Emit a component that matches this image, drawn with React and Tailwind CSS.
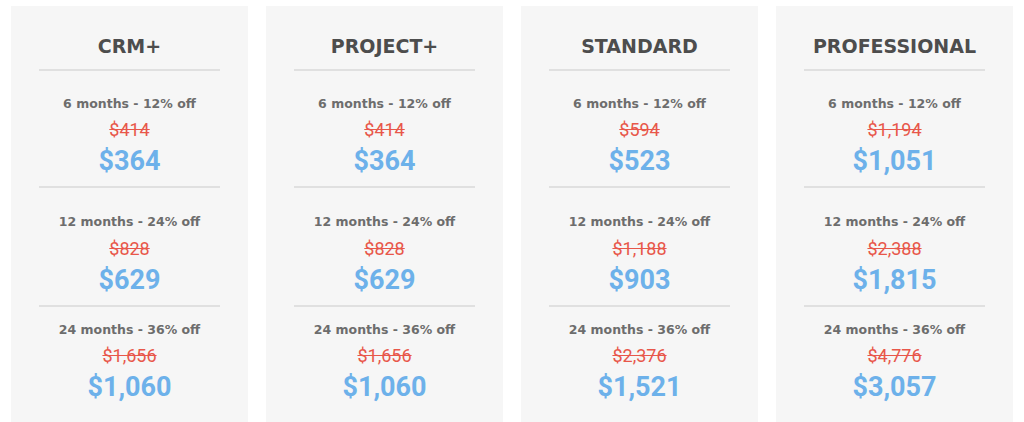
import React from "react";

const plans = [
  {
    name: "CRM+",
    rows: [
      ["6 months - 12% off", "$414", "$364"],
      ["12 months - 24% off", "$828", "$629"],
      ["24 months - 36% off", "$1,656", "$1,060"],
    ],
  },
  {
    name: "PROJECT+",
    rows: [
      ["6 months - 12% off", "$414", "$364"],
      ["12 months - 24% off", "$828", "$629"],
      ["24 months - 36% off", "$1,656", "$1,060"],
    ],
  },
  {
    name: "STANDARD",
    rows: [
      ["6 months - 12% off", "$594", "$523"],
      ["12 months - 24% off", "$1,188", "$903"],
      ["24 months - 36% off", "$2,376", "$1,521"],
    ],
  },
  {
    name: "PROFESSIONAL",
    rows: [
      ["6 months - 12% off", "$1,194", "$1,051"],
      ["12 months - 24% off", "$2,388", "$1,815"],
      ["24 months - 36% off", "$4,776", "$3,057"],
    ],
  },
];

const sectionCls = [
  "pt-[24px] pb-[9px] border-b-2 border-[#e0e0e0]",
  "pt-[25px] pb-[9px] border-b-2 border-[#e0e0e0]",
  "pt-[14px]",
];

const strikeCls = ["mt-[5px]", "mt-[6px]", "mt-[5px]"];

function Section({ row, idx }) {
  const [label, old, price] = row;
  return (
    <div className={"flex flex-col items-center " + sectionCls[idx]}>
      <div className="h-[18px] leading-[18px] text-[12.5px] font-bold text-[#6d6d6d] font-['DejaVu_Sans',sans-serif]">
        {label}
      </div>
      <div className={"h-[24px] leading-[24px] text-[18px] text-[#e8574a] line-through font-['Roboto',sans-serif] " + strikeCls[idx]}>
        {old}
      </div>
      <div className="mt-[3px] h-[32px] leading-[32px] text-[27px] font-bold text-[#6db1ea] font-['Roboto',sans-serif]">
        {price}
      </div>
    </div>
  );
}

export default function App() {
  return (
    <div className="w-[1024px] h-[422px] overflow-hidden bg-white flex gap-[18px] px-[11px] pt-[6px]">
      {plans.map((p) => (
        <div key={p.name} className="w-[237px] h-[430px] shrink-0 bg-[#f6f6f6] px-[28px]">
          <div className="h-[65px] pt-[28px] border-b-2 border-[#e0e0e0] flex justify-center">
            <div className="h-[24px] leading-[24px] text-[19px] font-bold text-[#4d4d4d] font-['DejaVu_Sans',sans-serif]">
              {p.name}
            </div>
          </div>
          {p.rows.map((r, i) => (
            <Section key={i} row={r} idx={i} />
          ))}
        </div>
      ))}
    </div>
  );
}
